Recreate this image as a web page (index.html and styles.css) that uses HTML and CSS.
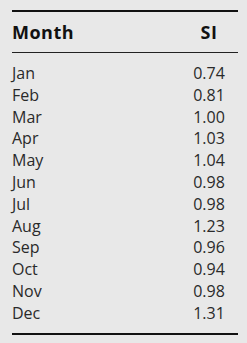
FILE: index.html
```html
<!DOCTYPE html>
<html>
<head>
<meta charset="utf-8">
<link rel="stylesheet" href="styles.css">
</head>
<body>
<div class="page">
  <table class="si-table">
    <thead>
      <tr><th class="c-month">Month</th><th class="c-si">SI</th></tr>
    </thead>
    <tbody>
      <tr class="first"><td class="c-month">Jan</td><td class="c-si">0.74</td></tr>
      <tr><td class="c-month">Feb</td><td class="c-si">0.81</td></tr>
      <tr><td class="c-month">Mar</td><td class="c-si">1.00</td></tr>
      <tr><td class="c-month">Apr</td><td class="c-si">1.03</td></tr>
      <tr><td class="c-month">May</td><td class="c-si">1.04</td></tr>
      <tr><td class="c-month">Jun</td><td class="c-si">0.98</td></tr>
      <tr><td class="c-month">Jul</td><td class="c-si">0.98</td></tr>
      <tr><td class="c-month">Aug</td><td class="c-si">1.23</td></tr>
      <tr><td class="c-month">Sep</td><td class="c-si">0.96</td></tr>
      <tr><td class="c-month">Oct</td><td class="c-si">0.94</td></tr>
      <tr><td class="c-month">Nov</td><td class="c-si">0.98</td></tr>
      <tr class="last"><td class="c-month">Dec</td><td class="c-si">1.31</td></tr>
    </tbody>
  </table>
</div>
</body>
</html>
```
FILE: styles.css
```css
html, body {
  margin: 0;
  padding: 0;
  background: #e8e8e8;
}
.page {
  padding: 10px 9px 0 12px;
  font-family: "Open Sans", "Liberation Sans", sans-serif;
  color: #1e1e1e;
}
.si-table {
  width: 226px;
  border-collapse: collapse;
  border-top: 2px solid #111;
  border-bottom: 2px solid #111;
}
.si-table th {
  font-size: 18px;
  font-weight: 700;
  letter-spacing: 0.5px;
  line-height: 24px;
  padding: 8px 0;
  border-bottom: 1px solid #222;
  color: #111;
}
.si-table td {
  font-size: 16px;
  line-height: 21.8px;
  padding: 0;
  color: #2a2a2a;
}
.c-month {
  text-align: left;
}
.c-si {
  width: 58px;
  text-align: center;
}
.si-table tr.first td {
  padding-top: 10px;
}
.si-table tr.last td {
  padding-bottom: 8px;
}
```
